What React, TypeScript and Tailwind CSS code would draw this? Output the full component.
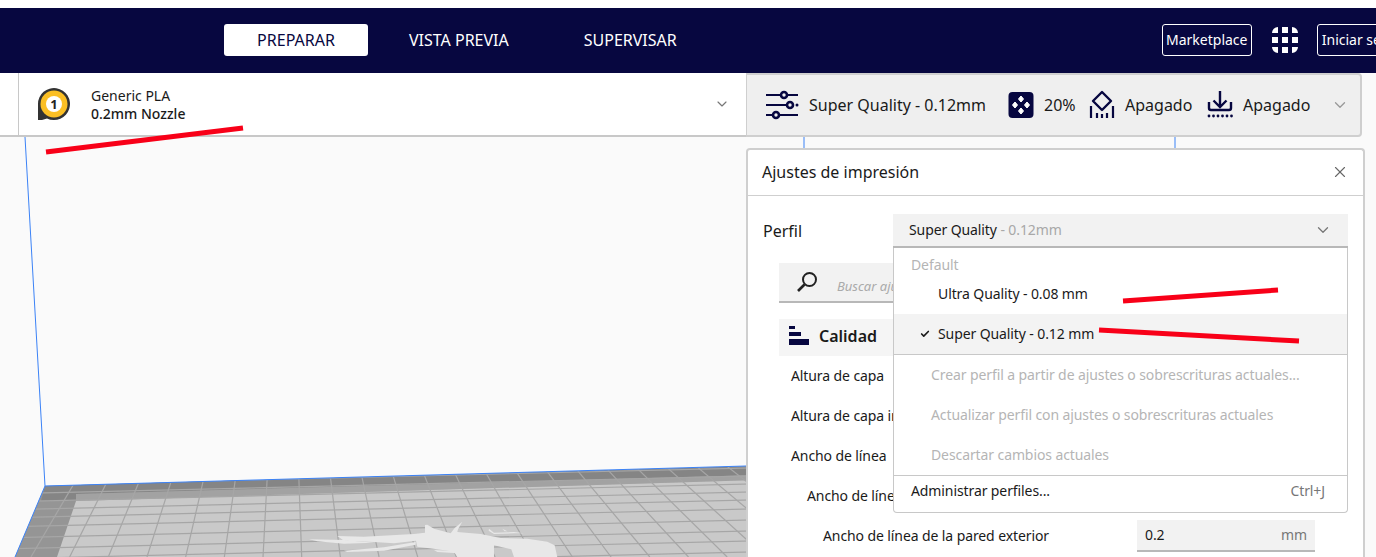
import React from 'react';
import { ChevronDown, X, Check } from 'lucide-react';

const NAVY = '#070740';

const PlateGrid = () => {
  const verticals = [];
  for (let k = -8; k < 16; k++) verticals.push(300 + k * 34.5);
  const rows = [479, 487, 495, 503, 511, 520, 531, 542, 552, 563, 574];
  return (
    <g stroke="#a6a6a6" strokeWidth="1.2" clipPath="url(#plate)">
      {verticals.map((x) => (
        <line key={x} x1={x + ((x - 286) * -50) / 388} y1={460} x2={x + ((x - 286) * 47) / 388} y2={557} />
      ))}
      {rows.map((y) => (
        <line key={y} x1={0} y1={y + 290 * 0.024} x2={800} y2={y - 510 * 0.024} />
      ))}
    </g>
  );
};

// 3D viewport behind the panels, page coordinates minus the 137px of bars above
const Viewport = () => (
  <svg className="absolute inset-0" width="1376" height="420" viewBox="0 137 1376 420">
    <defs>
      <clipPath id="plate">
        <polygon points="45,486 757,466 800,557 15,557" />
      </clipPath>
    </defs>
    <polygon points="45,486 757,466 800,557 15,557" fill="#959595" />
    <polygon points="45,486 757,466 757,475 76,494 76,501 41,501" fill="#858585" />
    <polygon points="76,494 757,475 757,480 76,501" fill="#a2a2a2" />
    <polygon points="76,501 757,480 800,557 57,557" fill="#c9c9c9" />
    <PlateGrid />
    {/* model silhouette showing through the plate, drawn at 3x */}
    <g transform="translate(294 510) scale(0.3333)" fill="#e8e8e8">
      <polygon points="130,78 210,80 360,72 393,68 393,45 400,44 420,56 470,70 482,54 505,35 492,58 490,66 560,72 620,84 700,86 760,95 782,106 790,141 660,141 652,118 600,106 600,141 490,141 480,125 430,118 370,110 366,92 300,100 240,96 150,92" />
      <polygon points="45,88 150,90 240,98 150,101 70,94" />
      <polygon points="150,122 270,112 365,96 365,104 270,122 160,126" />
      <polygon points="420,120 490,124 490,130 430,126" />
      <polygon points="585,56 600,68 660,66 690,70 660,70 600,72 584,62" />
      <polygon points="625,56 640,64 632,64" />
    </g>
    <g stroke="#3b82f6" strokeWidth="1" fill="none">
      <polyline points="25,137 45,486 15,557" />
      <line x1="45" y1="486" x2="746" y2="466" />
      <line x1="804" y1="137" x2="804" y2="148" />
      <line x1="1175" y1="137" x2="1175" y2="148" />
    </g>
  </svg>
);

const NozzleIcon = () => (
  <svg width="34" height="34" viewBox="0 0 34 34">
    <path d="M1 33V17a16 16 0 1 1 9 14.4l-5 1.6z" fill="#333" />
    <circle cx="17" cy="17" r="13.5" fill="#fbbf24" />
    <circle cx="17" cy="17" r="8" fill="#fff" />
    <text x="17" y="22" textAnchor="middle" fontSize="13" fontWeight="700" fill="#222" fontFamily="Noto Sans">1</text>
  </svg>
);

const SlidersIcon = () => (
  <svg width="34" height="30" viewBox="0 0 34 30" fill="none" stroke={NAVY} strokeWidth="2.2">
    <path d="M1 5h32M1 15h24M1 25h32" />
    <circle cx="19" cy="5" r="3" fill="#efefef" strokeWidth="2.6" />
    <circle cx="25" cy="15" r="3" fill="#efefef" strokeWidth="2.6" />
    <circle cx="11" cy="25" r="3" fill="#efefef" strokeWidth="2.6" />
    <circle cx="32" cy="15" r="1.5" fill={NAVY} stroke="none" />
  </svg>
);

const InfillIcon = () => (
  <svg width="26" height="30" viewBox="0 0 26 30">
    <rect x="0.5" y="2" width="25" height="26" rx="4" fill={NAVY} />
    <g fill="#fff" stroke="#fff" strokeLinejoin="round">
      <polygon points="13,6 15.5,9 13,12 10.5,9" />
      <polygon points="13,18 15.5,21 13,24 10.5,21" />
      <polygon points="7,12 9.5,15 7,18 4.5,15" />
      <polygon points="19,12 21.5,15 19,18 16.5,15" />
    </g>
  </svg>
);

const SupportIcon = () => (
  <svg width="26" height="30" viewBox="0 0 26 30" fill="none" stroke={NAVY} strokeWidth="2.4">
    <polygon points="13,2 22,11 13,20 4,11" strokeLinejoin="round" />
    <path d="M2 16v12M8 23v5M13 24v4M18 23v5M24 16v12" strokeWidth="2.2" />
  </svg>
);

const AdhesionIcon = () => (
  <svg width="26" height="30" viewBox="0 0 26 30" fill="none" stroke={NAVY} strokeWidth="2.4">
    <path d="M13 1v16M6.5 10.5l6.5 6.5 6.5-6.5" />
    <path d="M2 12v6a2 2 0 0 0 2 2h18a2 2 0 0 0 2-2v-6" />
    <g fill={NAVY} stroke="none">
      <circle cx="2" cy="26" r="1.4" />
      <circle cx="6.5" cy="26" r="1.4" />
      <circle cx="11" cy="26" r="1.4" />
      <circle cx="15.5" cy="26" r="1.4" />
      <circle cx="20" cy="26" r="1.4" />
      <circle cx="24.5" cy="26" r="1.4" />
    </g>
  </svg>
);

const AppsIcon = () => (
  <svg width="26" height="26" viewBox="0 0 26 26" fill="#fff">
    <path d="M0 6a6 6 0 0 1 6-6v6zM10 0h6v6h-6zM20 0a6 6 0 0 1 6 6h-6z" />
    <path d="M0 10h6v6H0zM10 10h6v6h-6zM20 10h6v6h-6z" />
    <path d="M0 20h6v6a6 6 0 0 1-6-6zM10 20h6v6h-6zM20 20h6a6 6 0 0 1-6 6z" />
  </svg>
);

const CalidadIcon = () => (
  <svg width="20" height="20" viewBox="0 0 20 20" fill={NAVY}>
    <rect x="0" y="0" width="6" height="3" />
    <rect x="0" y="6" width="12" height="4" />
    <rect x="0" y="13" width="20" height="6" />
  </svg>
);

const SearchIcon = () => (
  <svg width="24" height="24" viewBox="0 0 24 24" fill="none" stroke="#222" strokeWidth="2">
    <circle cx="14.5" cy="9.5" r="6.5" />
    <path d="M9.5 14.5L3 21" strokeWidth="2.6" />
  </svg>
);

const ProfileMenu = () => (
  <div className="absolute left-0 right-0 top-[34px] z-10 h-[265px] rounded-b border border-t-0 border-[#c8c8c8] bg-white text-sm tracking-[-0.1px]">
    <div className="h-[26px] pl-[17px] pt-[7px] text-[#b5b5b5]">Default</div>
    <div className="flex h-[40px] items-center pl-[44px] text-[#1a1a1a]">Ultra Quality - 0.08 mm</div>
    <div className="flex h-[41px] items-center border-b border-[#c8c8c8] bg-[#f3f3f3] text-[#1a1a1a]">
      <Check className="ml-[26px] mr-[8px] h-[10px] w-[10px]" strokeWidth={4} />
      Super Quality - 0.12 mm
    </div>
    <div className="flex h-[40px] items-center pl-[37px] text-[#b5b5b5]">Crear perfil a partir de ajustes o sobrescrituras actuales...</div>
    <div className="flex h-[40px] items-center pl-[37px] text-[#b5b5b5]">Actualizar perfil con ajustes o sobrescrituras actuales</div>
    <div className="flex h-[40px] items-center pl-[37px] text-[#b5b5b5]">Descartar cambios actuales</div>
    <div className="flex h-[31px] items-center justify-between border-t border-[#c8c8c8] pl-[17px] pr-[22px] text-[#1a1a1a]">
      <span>Administrar perfiles...</span>
      <span className="text-[#777]">Ctrl+J</span>
    </div>
  </div>
);

const SettingRow = ({ label, className, children }: { label: string; className: string; children?: React.ReactNode }) => (
  <div className={`flex h-[40px] items-center overflow-hidden whitespace-nowrap text-sm tracking-[-0.1px] text-[#1a1a1a] ${className}`}>
    <span className="flex-1">{label}</span>
    {children}
  </div>
);

const SettingsPanel = () => (
  <div className="relative ml-[746px] mt-[11px] h-[420px] w-[619px] rounded-t border-2 border-b-0 border-[#cfcfcf] bg-white text-[#1a1a1a]">
    <div className="flex h-[46px] items-center justify-between border-b border-[#cfcfcf] pb-[2px] pl-[14px] pr-[14px]">
      <span className="text-base">Ajustes de impresión</span>
      <X className="h-[18px] w-[18px] text-[#666]" strokeWidth={1.5} />
    </div>
    <div className="flex items-center pl-[15px] pr-[15px] pt-[18px]">
      <span className="w-[130px] text-base">Perfil</span>
      <div className="relative flex h-[34px] flex-1 items-center justify-between border-b-2 border-[#b8b8b8] bg-[#f2f2f2] pl-[16px] pr-[16px] text-sm tracking-[-0.1px]">
        <span>
          Super Quality <span className="text-[#a8a8a8]">- 0.12mm</span>
        </span>
        <ChevronDown className="h-[18px] w-[18px] text-[#777]" strokeWidth={1.75} />
        <ProfileMenu />
      </div>
    </div>
    <div className="ml-[31px] mr-[15px]">
      <div className="mt-[15px] flex h-[40px] items-center gap-[18px] border-b-2 border-[#b8b8b8] bg-[#f2f2f2] pl-[16px]">
        <SearchIcon />
        <span className="mt-[9px] text-[13px] italic text-[#aaa]">Buscar ajustes</span>
      </div>
      <div className="mt-[16px] flex h-[37px] items-center gap-[10px] bg-[#f5f5f5] pb-[3px] pl-[10px] text-base font-semibold">
        <CalidadIcon />
        <span>Calidad</span>
      </div>
      <SettingRow label="Altura de capa" className="w-[114px] pl-[12px]" />
      <SettingRow label="Altura de capa inicial" className="w-[114px] pl-[12px]" />
      <SettingRow label="Ancho de línea" className="w-[114px] pl-[12px]" />
      <SettingRow label="Ancho de línea de pared" className="w-[114px] pl-[28px]" />
      <SettingRow label="Ancho de línea de la pared exterior" className="pl-[44px] pr-[33px]">
        <div className="flex h-[32px] w-[178px] items-center justify-between border-b-2 border-[#b8b8b8] bg-[#f2f2f2] px-[8px]">
          <span>0.2</span>
          <span className="text-[#777]">mm</span>
        </div>
      </SettingRow>
    </div>
  </div>
);

export default function App() {
  return (
    <div className="relative flex h-[557px] w-[1376px] flex-col overflow-hidden bg-[#fafafa] font-['Noto_Sans',sans-serif]">
      <div className="h-[8px] shrink-0 bg-white" />
      <header className="flex h-[65px] shrink-0 items-center whitespace-nowrap bg-[#070740] pb-[2px] text-base text-white">
        <button className="ml-[224px] h-[32px] w-[144px] shrink-0 rounded-[3px] bg-white text-[#070740]">PREPARAR</button>
        <button className="ml-[41px] shrink-0">VISTA PREVIA</button>
        <button className="ml-[75px] shrink-0">SUPERVISAR</button>
        <button className="ml-[485px] h-[32px] w-[90px] shrink-0 rounded-[3px] border border-white text-sm">Marketplace</button>
        <span className="ml-[20px] shrink-0"><AppsIcon /></span>
        <button className="ml-[19px] h-[32px] w-[100px] shrink-0 rounded-[3px] border border-white pl-[4px] text-left text-sm">Iniciar sesión</button>
      </header>
      <div className="flex h-[64px] shrink-0 text-[#1a1a1a]">
        <div className="w-[19px] border-b-2 border-r border-[#c8c8c8] bg-white" />
        <div className="flex w-[727px] items-center border-b-2 border-[#c8c8c8] bg-white pl-[18px] pr-[16px]">
          <NozzleIcon />
          <div className="ml-[20px] flex-1 pt-[2px] text-sm leading-[18px]">
            <div>Generic PLA</div>
            <div className="font-medium">0.2mm Nozzle</div>
          </div>
          <ChevronDown className="h-[16px] w-[16px] text-[#777]" strokeWidth={1.75} />
        </div>
        <div className="flex w-[616px] items-center rounded-r border-2 border-l border-[#cfcfcf] bg-[#efefef] pl-[18px] text-base">
          <SlidersIcon />
          <span className="ml-[10px] w-[199px]">Super Quality - 0.12mm</span>
          <InfillIcon />
          <span className="ml-[10px] w-[45px]">20%</span>
          <SupportIcon />
          <span className="ml-[10px] w-[82px]">Apagado</span>
          <AdhesionIcon />
          <span className="ml-[10px] w-[88px]">Apagado</span>
          <ChevronDown className="h-[18px] w-[18px] text-[#999]" strokeWidth={1.75} />
        </div>
      </div>
      <main className="relative flex-1">
        <Viewport />
        <SettingsPanel />
      </main>
      {/* red marks someone drew over the screenshot */}
      <svg className="pointer-events-none absolute inset-0 z-20" width="1376" height="557" fill="none" stroke="#f80018" strokeWidth="5">
        <line x1="46" y1="152" x2="243" y2="128" />
        <line x1="1123" y1="301" x2="1278" y2="290" />
        <line x1="1099" y1="330" x2="1299" y2="341" />
      </svg>
    </div>
  );
}
